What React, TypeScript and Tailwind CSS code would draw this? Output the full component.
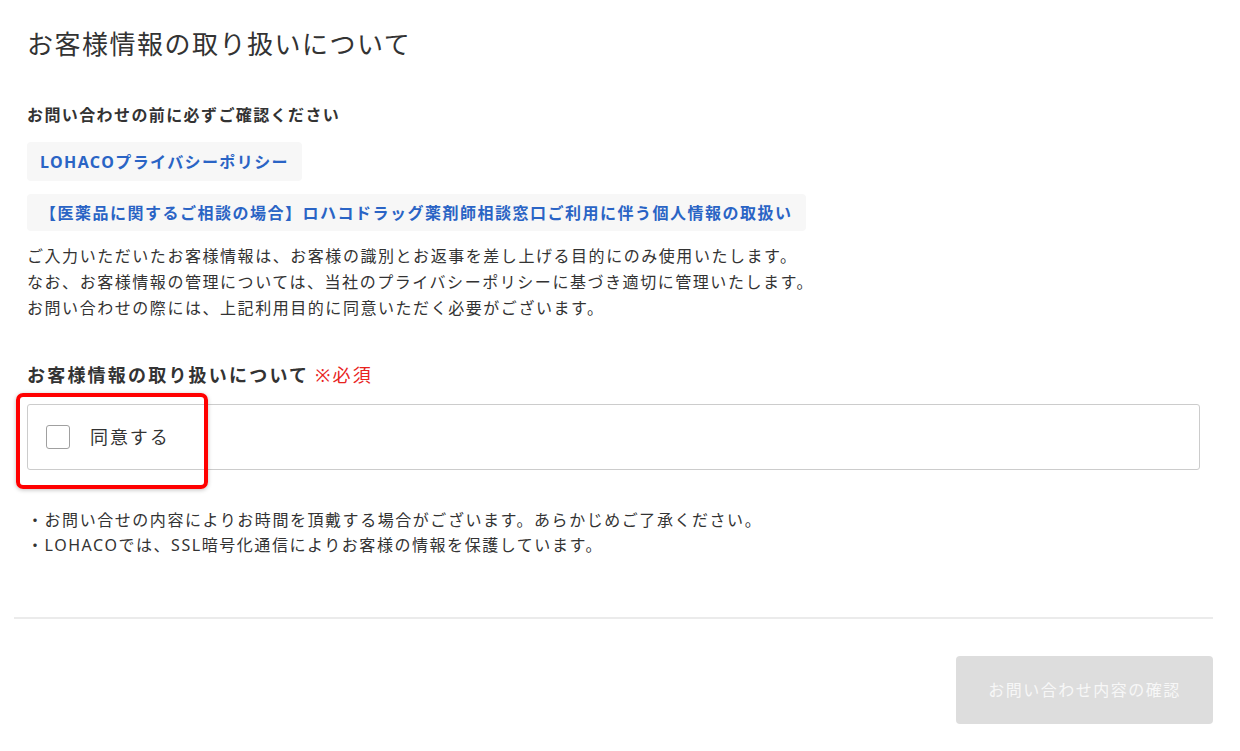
import { useState } from "react";

const font = {
  fontFamily: '"Noto Sans", "Noto Sans CJK JP", sans-serif',
};

const notes = [
  "・お問い合せの内容によりお時間を頂戴する場合がございます。あらかじめご了承ください。",
  "・LOHACOでは、SSL暗号化通信によりお客様の情報を保護しています。",
];

export default function App() {
  const [agreed, setAgreed] = useState(false);

  return (
    <main style={font} className="min-h-screen bg-white text-[#333]">
      <div className="ml-[14px] w-[1199px] pb-[27px]">
        <div className="px-[13px]">
          <h1 className="pt-[26px] text-[26px] leading-[36px] font-normal tracking-[1.5px]">
            お客様情報の取り扱いについて
          </h1>

          <p className="mt-[41px] text-[16px] leading-[24px] font-bold tracking-[1.4px]">
            お問い合わせの前に必ずご確認ください
          </p>

          <div className="mt-[15px] flex flex-col items-start gap-[13px]">
            <a className="flex h-[39px] items-center rounded-[4px] bg-[#f7f7f7] px-[13px] text-[16px] font-bold tracking-[1.4px] text-[#2a64c5]">
              LOHACOプライバシーポリシー
            </a>
            <a className="flex h-[37px] items-center rounded-[4px] bg-[#f7f7f7] px-[13px] text-[16px] font-bold tracking-[1.5px] text-[#2a64c5]">
              【医薬品に関するご相談の場合】ロハコドラッグ薬剤師相談窓口ご利用に伴う個人情報の取扱い
            </a>
          </div>

          <p className="mt-[12px] text-[16px] leading-[26px] tracking-[1.55px]">
            ご入力いただいたお客様情報は、お客様の識別とお返事を差し上げる目的にのみ使用いたします。
            <br />
            なお、お客様情報の管理については、当社のプライバシーポリシーに基づき適切に管理いたします。
            <br />
            お問い合わせの際には、上記利用目的に同意いただく必要がございます。
          </p>

          <h2 className="mt-[41px] text-[18px] leading-[26px] font-bold tracking-[2.2px]">
            お客様情報の取り扱いについて
            <span className="ml-[6px] font-normal text-[#e8231d]">※必須</span>
          </h2>

          <div className="relative mt-[16px]">
            <label className="flex h-[66px] cursor-pointer items-center rounded-[3px] border border-[#cccccc] pl-[18px]">
              <input
                type="checkbox"
                checked={agreed}
                onChange={(e) => setAgreed(e.target.checked)}
                className="sr-only"
              />
              <span className="h-[24px] w-[24px] rounded-[3px] border border-[#a0a0a0] bg-white" />
              <span className="ml-[20px] text-[18px] tracking-[1.9px]">同意する</span>
            </label>
            <div className="pointer-events-none absolute -top-[11px] -left-[11px] h-[96px] w-[192px] rounded-[7px] border-[4px] border-[#ff0000] shadow-[0_1px_4px_rgba(0,0,0,0.25)]" />
          </div>

          <ul className="mt-[38px] text-[16px] leading-[25px] tracking-[1.55px]">
            {notes.map((note) => (
              <li key={note}>{note}</li>
            ))}
          </ul>
        </div>

        <div className="mt-[59px] h-[2px] bg-[#ebebeb]" />

        <div className="mt-[37px] flex justify-end">
          <button
            disabled
            className="h-[68px] w-[257px] rounded-[4px] bg-[#dddddd] text-[16px] tracking-[1.5px] text-[#f7f7f7]"
          >
            お問い合わせ内容の確認
          </button>
        </div>
      </div>
    </main>
  );
}
